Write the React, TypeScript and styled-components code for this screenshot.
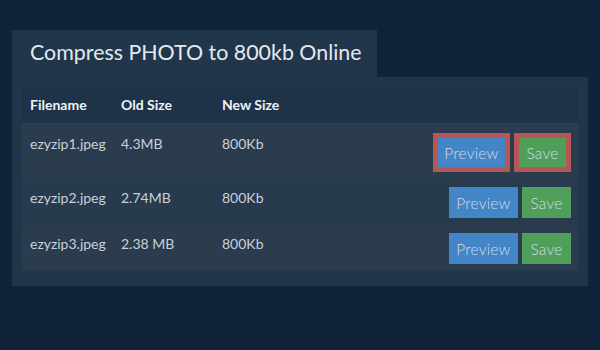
import React from "react";
import styled, { createGlobalStyle } from "styled-components";

const Global = createGlobalStyle`
  html, body { margin: 0; padding: 0; background: #10233a; }
  body { font-family: Lato, "Open Sans", sans-serif; }
`;

const Page = styled.div`
  width: 600px;
  height: 350px;
  box-sizing: border-box;
  padding: 30px 12px 0 12px;
  background: #10233a;
`;

const Tab = styled.div`
  width: 365px;
  height: 47px;
  box-sizing: border-box;
  padding-left: 18px;
  background: #22364b;
  display: flex;
  align-items: center;
`;

const Title = styled.h1`
  margin: 0;
  font-family: Lato, sans-serif;
  font-weight: 400;
  font-size: 21.4px;
  color: #e4e9ee;
  line-height: 1;
  padding-bottom: 2px;
`;

const Panel = styled.div`
  width: 576px;
  box-sizing: border-box;
  padding: 10px 10px 16px 10px;
  background: #22364b;
`;

const Table = styled.div`
  display: flex;
  flex-direction: column;
`;

const HeaderRow = styled.div`
  display: flex;
  align-items: center;
  height: 36px;
  padding-left: 8px;
  background: #1f3348;
  font-weight: 700;
  font-size: 14px;
  color: #eef2f6;
`;

const Row = styled.div<{ $h: number; $pad: number; $alt?: boolean }>`
  display: flex;
  align-items: flex-start;
  height: ${(p) => p.$h}px;
  box-sizing: border-box;
  padding: ${(p) => p.$pad}px 7px 0 8px;
  background: ${(p) => (p.$alt ? "#283a4e" : "#2b3c4f")};
  font-size: 14px;
  color: #c9d1da;
`;

const Cell = styled.div<{ $w?: number; $grow?: boolean }>`
  ${(p) => (p.$w ? `width: ${p.$w}px; flex: none;` : "")}
  ${(p) => (p.$grow ? "flex: 1;" : "")}
  line-height: 22px;
`;

const Actions = styled.div`
  display: flex;
  gap: 4px;
`;

const Btn = styled.button<{ $kind: "blue" | "green"; $hi?: boolean; $w: number }>`
  font-family: Lato, sans-serif;
  font-weight: 300;
  font-size: 15.5px;
  letter-spacing: 0.2px;
  color: #d3dde8;
  background: ${(p) => (p.$kind === "blue" ? "#4386c7" : "#4f9e59")};
  border: ${(p) => (p.$hi ? "5px solid #b65657" : "none")};
  box-sizing: border-box;
  width: ${(p) => (p.$hi ? p.$w + 8 : p.$w)}px;
  height: ${(p) => (p.$hi ? 39 : 31)}px;
  padding: 0;
  margin: 0;
  text-align: center;
  cursor: pointer;
`;

type Item = { name: string; old: string; next: string; h: number; pad: number; hi?: boolean };

const items: Item[] = [
  { name: "ezyzip1.jpeg", old: "4.3MB", next: "800Kb", h: 55, pad: 10, hi: true },
  { name: "ezyzip2.jpeg", old: "2.74MB", next: "800Kb", h: 48, pad: 9 },
  { name: "ezyzip3.jpeg", old: "2.38 MB", next: "800Kb", h: 44, pad: 7 },
];

export default function App() {
  return (
    <Page>
      <Global />
      <Tab>
        <Title>Compress PHOTO to 800kb Online</Title>
      </Tab>
      <Panel>
        <Table>
          <HeaderRow>
            <Cell $w={91}>Filename</Cell>
            <Cell $w={101}>Old Size</Cell>
            <Cell $grow>New Size</Cell>
          </HeaderRow>
          {items.map((it, i) => (
            <Row key={it.name} $h={it.h} $pad={it.pad} $alt={i % 2 === 1}>
              <Cell $w={91}>{it.name}</Cell>
              <Cell $w={101}>{it.old}</Cell>
              <Cell $grow>{it.next}</Cell>
              <Actions>
                <Btn $kind="blue" $hi={it.hi} $w={69}>Preview</Btn>
                <Btn $kind="green" $hi={it.hi} $w={49}>Save</Btn>
              </Actions>
            </Row>
          ))}
        </Table>
      </Panel>
    </Page>
  );
}
